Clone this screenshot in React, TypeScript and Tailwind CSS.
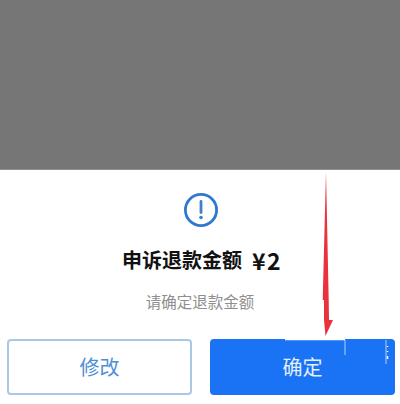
const cjk = "font-['Noto_Sans_CJK_SC','Noto_Sans',sans-serif]";

function AlertIcon() {
  return (
    <svg width="36" height="36" viewBox="0 0 36 36" fill="none">
      <circle cx="18" cy="18" r="15.6" stroke="#2f78d0" strokeWidth="2.8" />
      <path d="M18 9.500v11" stroke="#3f80cc" strokeWidth="2.800" strokeLinecap="round" />
      <circle cx="18" cy="25.500" r="1.800" fill="#3f80cc" />
    </svg>
  );
}

// red annotation arrow drawn over the dialog
function Arrow() {
  return (
    <svg
      className="absolute left-[318px] top-[172px]"
      width="18"
      height="166"
      viewBox="0 0 18 166"
    >
      <path d="M8 0 L10.700 128 L11 148 L15 148 L7.500 164 L6 148 L6 128 L4.700 128 Z" fill="#e8323c" />
    </svg>
  );
}

// compression specks along the top of the blue button
function Specks() {
  return (
    <svg
      className="absolute left-[280px] top-[338px]"
      width="112"
      height="28"
      viewBox="0 0 112 28"
      fill="none"
    >
      <path d="M5 1.500h60" stroke="#ffffff" strokeWidth="1.500" />
      <path d="M65 2v15M106 2v24" stroke="#dbe9fb" strokeWidth="0.800" />
      <path d="M107.500 8v1M107.500 13v1M107.500 18v3" stroke="#ffffff" strokeWidth="1.500" />
    </svg>
  );
}

export default function App() {
  return (
    <div className={`relative flex h-[404px] w-[400px] flex-col bg-white ${cjk}`}>
      <div className="h-[170px] bg-[#767676] border-b border-[#8f8f8f]" />
      <div className="flex flex-1 flex-col items-center pt-[22px]">
        <div className="ml-px h-[36px]">
          <AlertIcon />
        </div>
        <div className="mt-[15px] flex h-[34px] items-center pl-[4px] text-[20px] font-bold leading-none text-[#111]">
          申诉退款金额
          <span className="ml-[10px] text-[23px] tracking-[1.5px]">¥2</span>
        </div>
        <div className="mt-[11px] text-[15.500px] leading-[26px] text-[#8f8f8f]">请确定退款金额</div>
        <div className="mt-[25px] flex w-full justify-between pl-[7px] pr-[5px]">
          <button className="h-[56px] w-[185px] rounded-[4px] border-2 border-[#a9c8e6] text-[20px] text-[#4d8fd6]">
            修改
          </button>
          <button className="h-[56px] w-[185px] rounded-[4px] bg-[#1a73f5] text-[20px] text-[#e4effb]">
            确定
          </button>
        </div>
      </div>
      <Arrow />
      <Specks />
    </div>
  );
}
